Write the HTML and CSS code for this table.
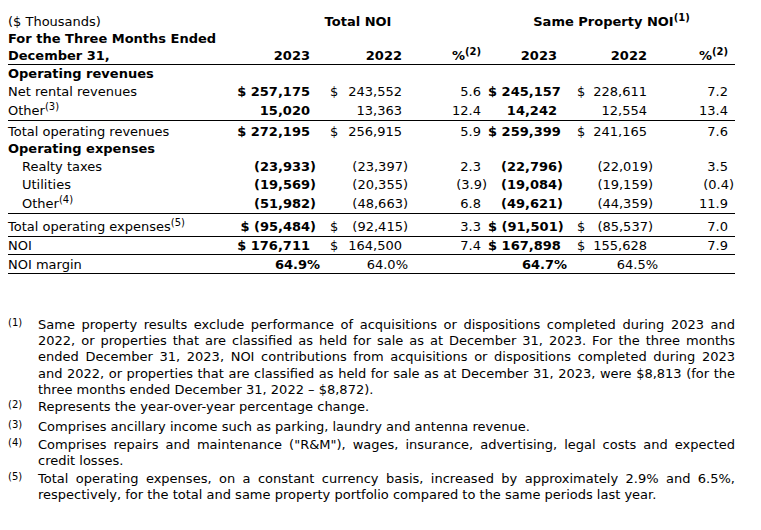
FILE: index.html
```html
<!DOCTYPE html>
<html>
<head>
<meta charset="utf-8">
<link rel="stylesheet" href="styles.css">
</head>
<body>
<div class="page">
<table class="noi">
  <colgroup>
    <col class="c-lbl"><col class="c-t23"><col class="c-t22"><col class="c-tp"><col class="c-s23"><col class="c-s22"><col class="c-sp">
  </colgroup>
  <thead>
    <tr class="h1">
      <td class="lbl">($ Thousands)</td>
      <th colspan="3" class="grp">Total NOI</th>
      <th colspan="3" class="grp">Same Property NOI<sup>(1)</sup></th>
    </tr>
    <tr class="h2 rule">
      <th class="lbl">For the Three Months Ended<br>December 31,</th>
      <th class="num">2023</th>
      <th class="num">2022</th>
      <th class="num">%<sup>(2)</sup></th>
      <th class="num">2023</th>
      <th class="num">2022</th>
      <th class="num">%<sup>(2)</sup></th>
    </tr>
  </thead>
  <tbody>
    <tr><td class="lbl b">Operating revenues</td><td></td><td></td><td></td><td></td><td></td><td></td></tr>
    <tr>
      <td class="lbl">Net rental revenues</td>
      <td class="num b">$ 257,175</td>
      <td class="num d"><span class="cur">$</span>243,552</td>
      <td class="num">5.6</td>
      <td class="num b">$ 245,157</td>
      <td class="num d"><span class="cur">$</span>228,611</td>
      <td class="num">7.2</td>
    </tr>
    <tr class="rule r-other3">
      <td class="lbl">Other<sup>(3)</sup></td>
      <td class="num b">15,020</td>
      <td class="num">13,363</td>
      <td class="num">12.4</td>
      <td class="num b">14,242</td>
      <td class="num">12,554</td>
      <td class="num">13.4</td>
    </tr>
    <tr class="r-totrev">
      <td class="lbl">Total operating revenues</td>
      <td class="num b">$ 272,195</td>
      <td class="num d"><span class="cur">$</span>256,915</td>
      <td class="num">5.9</td>
      <td class="num b">$ 259,399</td>
      <td class="num d"><span class="cur">$</span>241,165</td>
      <td class="num">7.6</td>
    </tr>
    <tr><td class="lbl b">Operating expenses</td><td></td><td></td><td></td><td></td><td></td><td></td></tr>
    <tr>
      <td class="lbl ind">Realty taxes</td>
      <td class="num b"><span class="neg">(23,933)</span></td>
      <td class="num"><span class="neg">(23,397)</span></td>
      <td class="num">2.3</td>
      <td class="num b"><span class="neg">(22,796)</span></td>
      <td class="num"><span class="neg">(22,019)</span></td>
      <td class="num">3.5</td>
    </tr>
    <tr>
      <td class="lbl ind">Utilities</td>
      <td class="num b"><span class="neg">(19,569)</span></td>
      <td class="num"><span class="neg">(20,355)</span></td>
      <td class="num"><span class="neg">(3.9)</span></td>
      <td class="num b"><span class="neg">(19,084)</span></td>
      <td class="num"><span class="neg">(19,159)</span></td>
      <td class="num"><span class="neg">(0.4)</span></td>
    </tr>
    <tr class="rule r-other4">
      <td class="lbl ind">Other<sup>(4)</sup></td>
      <td class="num b"><span class="neg">(51,982)</span></td>
      <td class="num"><span class="neg">(48,663)</span></td>
      <td class="num">6.8</td>
      <td class="num b"><span class="neg">(49,621)</span></td>
      <td class="num"><span class="neg">(44,359)</span></td>
      <td class="num">11.9</td>
    </tr>
    <tr class="rule r-totexp">
      <td class="lbl">Total operating expenses<sup>(5)</sup></td>
      <td class="num b"><span class="neg">$ (95,484)</span></td>
      <td class="num d"><span class="cur">$</span><span class="neg">(92,415)</span></td>
      <td class="num">3.3</td>
      <td class="num b"><span class="neg">$ (91,501)</span></td>
      <td class="num d"><span class="cur">$</span><span class="neg">(85,537)</span></td>
      <td class="num">7.0</td>
    </tr>
    <tr class="rule r-noi">
      <td class="lbl">NOI</td>
      <td class="num b">$ 176,711</td>
      <td class="num d"><span class="cur">$</span>164,500</td>
      <td class="num">7.4</td>
      <td class="num b">$ 167,898</td>
      <td class="num d"><span class="cur">$</span>155,628</td>
      <td class="num">7.9</td>
    </tr>
    <tr class="rule r-margin">
      <td class="lbl">NOI margin</td>
      <td class="num b"><span class="pm pm-b">64.9%</span></td>
      <td class="num"><span class="pm pm-t">64.0%</span></td>
      <td></td>
      <td class="num b"><span class="pm pm-b">64.7%</span></td>
      <td class="num"><span class="pm pm-s">64.5%</span></td>
      <td></td>
    </tr>
  </tbody>
</table>

<ol class="notes">
  <li class="n1"><span class="mk">(1)</span><p><span class="jl">Same property results exclude performance of acquisitions or dispositions completed during 2023 and</span><span class="jl">2022, or properties that are classified as held for sale as at December 31, 2023. For the three months</span><span class="jl">ended December 31, 2023, NOI contributions from acquisitions or dispositions completed during 2023</span><span class="jl">and 2022, or properties that are classified as held for sale as at December 31, 2023, were $8,813 (for the</span><span class="ll">three months ended December 31, 2022 – $8,872).</span></p></li>
  <li class="n2"><span class="mk">(2)</span><p>Represents the year-over-year percentage change.</p></li>
  <li><span class="mk">(3)</span><p>Comprises ancillary income such as parking, laundry and antenna revenue.</p></li>
  <li><span class="mk">(4)</span><p>Comprises repairs and maintenance ("R&amp;M"), wages, insurance, advertising, legal costs and expected credit losses.</p></li>
  <li><span class="mk">(5)</span><p>Total operating expenses, on a constant currency basis, increased by approximately 2.9% and 6.5%, respectively, for the total and same property portfolio compared to the same periods last year.</p></li>
</ol>
</div>
</body>
</html>
```

FILE: styles.css
```css
html, body {
  margin: 0;
  padding: 0;
  background: #fff;
}
body {
  font-family: "DejaVu Sans", Verdana, sans-serif;
  font-size: 13px;
  color: #000;
}
.page {
  padding: 13px 26px 0 8px;
}
.noi {
  width: 727px;
  border-collapse: collapse;
  table-layout: fixed;
}
.c-lbl { width: 220px; }
.c-t23 { width: 89px; }
.c-t22 { width: 92px; }
.c-tp { width: 79px; }
.c-s23 { width: 76px; }
.c-s22 { width: 90px; }
.c-sp { width: 81px; }

.noi td, .noi th {
  padding: 0 7px 0 0;
  line-height: 18px;
  white-space: nowrap;
  vertical-align: bottom;
}
.noi th { font-weight: bold; }
.noi .lbl {
  text-align: left;
  padding-left: 0;
  white-space: normal;
}
.noi .grp {
  text-align: center;
  padding: 0;
}
.h1 td, .h1 th { line-height: 17px; }
.h2 th { line-height: 17px; }
.noi .num { text-align: right; }
.b { font-weight: bold; }
.noi .ind { padding-left: 14px; }
.rule td, .rule th { border-bottom: 1px solid #000; }
.d .cur { float: left; padding-left: 13px; }
.noi sup {
  font-size: 10px;
  line-height: 0;
  vertical-align: 5px;
}
.neg { margin-right: -6px; }

.r-other3 td { padding-top: 1px; }
.r-totrev td { padding-top: 2px; line-height: 17px; }
.r-other4 td { padding-top: 1px; }
.r-totexp td { padding-top: 4px; }
.r-noi td { line-height: 17px; }
.r-margin td { padding-top: 1px; line-height: 17px; }

.pm-b { margin-right: -10px; }
.pm-t { margin-right: -6px; }
.pm-s { margin-right: -11px; }

.notes {
  list-style: none;
  margin: 43px 0 0 0;
  padding: 0;
  width: 727px;
}
.notes li {
  display: flex;
  margin-bottom: 1.7px;
  line-height: 16.2px;
}
.notes li.n1 { margin-bottom: 1px; }
.notes li.n2 { margin-bottom: 4px; }
.notes .mk {
  flex: 0 0 30px;
  font-size: 10px;
  line-height: 12px;
}
.notes p {
  flex: 1;
  margin: 0;
  text-align: justify;
}
.notes .jl {
  display: block;
  text-align: justify;
  text-align-last: justify;
}
.notes .ll {
  display: block;
}
```
